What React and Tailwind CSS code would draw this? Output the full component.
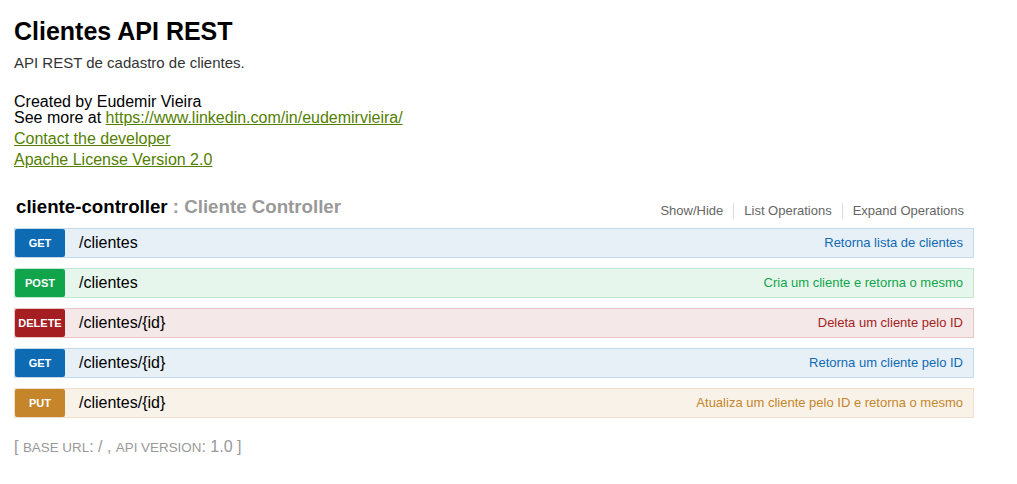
const ops = [
  {
    method: "GET",
    path: "/clientes",
    summary: "Retorna lista de clientes",
    row: "bg-[#e7f0f7] border-[#c3d9ec]",
    badge: "bg-[#0f6ab4]",
    text: "text-[#0f6ab4]",
  },
  {
    method: "POST",
    path: "/clientes",
    summary: "Cria um cliente e retorna o mesmo",
    row: "bg-[#e7f6ec] border-[#c3e8d1]",
    badge: "bg-[#10a54a]",
    text: "text-[#10a54a]",
  },
  {
    method: "DELETE",
    path: "/clientes/{id}",
    summary: "Deleta um cliente pelo ID",
    row: "bg-[#f5e8e8] border-[#e8c6c7]",
    badge: "bg-[#a41e22]",
    text: "text-[#a41e22]",
  },
  {
    method: "GET",
    path: "/clientes/{id}",
    summary: "Retorna um cliente pelo ID",
    row: "bg-[#e7f0f7] border-[#c3d9ec]",
    badge: "bg-[#0f6ab4]",
    text: "text-[#0f6ab4]",
  },
  {
    method: "PUT",
    path: "/clientes/{id}",
    summary: "Atualiza um cliente pelo ID e retorna o mesmo",
    row: "bg-[#f9f2e9] border-[#f0e0ca]",
    badge: "bg-[#c5862b]",
    text: "text-[#c5862b]",
  },
];

const App = () => {
  return (
    <div className="min-h-screen bg-white font-['Liberation_Sans',Arial,sans-serif] text-black">
      <div className="w-[974px] pl-[14px] pt-[16px]">
        {/* info */}
        <h1 className="text-[25px] leading-[30px] font-bold">Clientes API REST</h1>
        <p className="mt-[7px] text-[15px] leading-[20px] text-[#333]">
          API REST de cadastro de clientes.
        </p>
        <div className="mt-[21px] text-[16px] leading-[16px]">
          <div>Created by Eudemir Vieira</div>
          <div>
            See more at{" "}
            <a href="#" className="text-[#547f00] underline">
              https://www.linkedin.com/in/eudemirvieira/
            </a>
          </div>
        </div>
        <div className="mt-[2px] text-[16px] leading-[21px]">
          <a href="#" className="text-[#547f00] underline">
            Contact the developer
          </a>
        </div>
        <div className="text-[16px] leading-[21px]">
          <a href="#" className="text-[#547f00] underline">
            Apache License Version 2.0
          </a>
        </div>

        {/* resource */}
        <div className="mt-[25px] flex items-end justify-between pr-[10px]">
          <h2 className="pl-[2px] text-[18.7px] leading-[24px] font-bold">
            cliente-controller{" "}
            <span className="text-[#999]">: Cliente Controller</span>
          </h2>
          <ul className="flex items-center text-[13px] leading-[16px] text-[#666]">
            <li className="pr-[10px] border-r border-[#ddd]">Show/Hide</li>
            <li className="px-[10px] border-r border-[#ddd]">List Operations</li>
            <li className="pl-[10px]">Expand Operations</li>
          </ul>
        </div>

        <div className="mt-[9px] flex flex-col gap-[10px]">
          {ops.map((op, i) => (
            <div
              key={i}
              className={`flex h-[30px] items-center border ${op.row}`}
            >
              <span
                className={`flex h-[28px] w-[50px] items-center justify-center rounded-[2px] text-[11px] font-bold text-white ${op.badge}`}
              >
                {op.method}
              </span>
              <span className="ml-[14px] text-[16px] text-black">{op.path}</span>
              <span className={`ml-auto pr-[10px] text-[13px] ${op.text}`}>
                {op.summary}
              </span>
            </div>
          ))}
        </div>

        <div className="mt-[19px] text-[#999] text-[16px] leading-[20px]">
          [ <span className="text-[13.4px]">BASE URL</span>: / ,{" "}
          <span className="text-[13.4px]">API VERSION</span>: 1.0 ]
        </div>
      </div>
    </div>
  );
};

export default App;
